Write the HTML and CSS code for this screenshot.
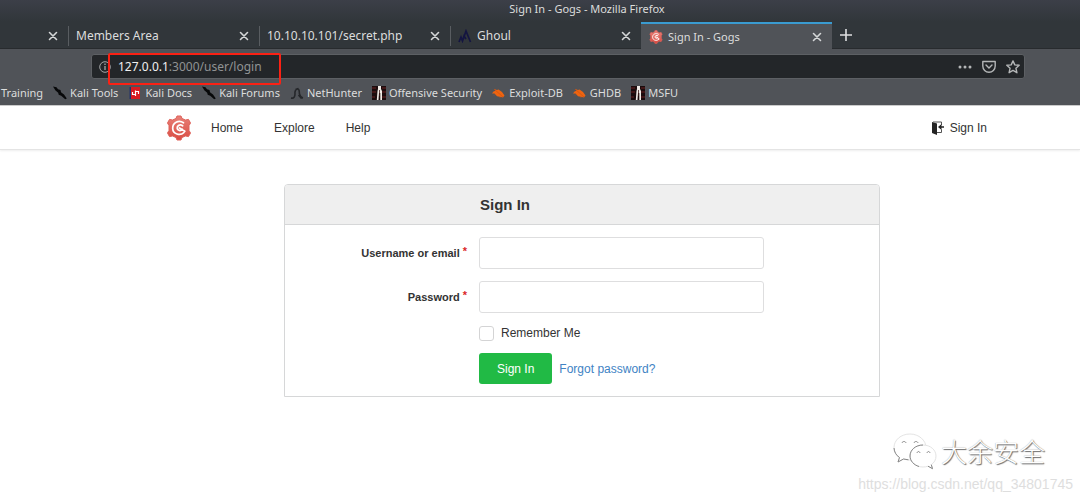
FILE: index.html
```html
<!DOCTYPE html>
<html lang="en">
<head>
<meta charset="utf-8">
<title>Sign In - Gogs</title>
<link rel="stylesheet" href="styles.css">
</head>
<body>
<svg class="defs" width="0" height="0" aria-hidden="true">
  <defs>
    <linearGradient id="red" x1="0" y1="0" x2="0" y2="1"><stop offset="0" stop-color="#e88078"/><stop offset="1" stop-color="#d94c42"/></linearGradient>
    <symbol id="gogs" viewBox="0 0 26 26">
      <path fill="url(#red)" stroke="#df625a" stroke-width="1" stroke-linejoin="round" d="M11 1h4l1 2.500 3.500 1.500 3-.6 2 3.600-1.500 2.600v4.800l1.500 2.600-2 3.600-3-.6-3.500 1.500-1 2.500h-4l-1-2.500L6.500 21l-3 .6-2-3.600L3 15.400v-4.800L1.500 8l2-3.600 3 .6L10 3.500z"/>
      <path fill="none" stroke="#fff" stroke-width="1.700" stroke-linecap="round" d="M17.500 7.800C12.500 4.500 6.500 8 6.700 13.500c.2 5.500 7.300 7.800 11.300 4"/>
      <path fill="none" stroke="#fff" stroke-width="1.800" stroke-linecap="round" d="M16.600 10.700c-2.800-1.700-5.600-.1-5.400 2.400.2 2.700 3.600 3.200 5 1.200M13.500 13l5.300 3.200"/>
    </symbol>
    <symbol id="close" viewBox="0 0 10 10"><path d="M1.500 1.500l7 7m0-7l-7 7" stroke="#d5d7d8" stroke-width="1.600" stroke-linecap="round"/></symbol>
    <symbol id="knife" viewBox="0 0 14 14"><path fill="#070809" d="M0 .5l3.500.8 1.500 2 2.500.6.5 2.400 3 2.200 2.800 4-1.600.8-4-3.600-2.500-1-.5-2L2.500 4.500z"/></symbol>
    <symbol id="hunter" viewBox="0 0 14 14"><path fill="none" stroke="#25272a" stroke-width="1.600" d="M1 12c3 .8 4-1.500 4-4C4.500 5 6 3 7.500 3c2.500 0 1.500 3 2 5 .5 2 1.500 3.500 3.500 4M5.500 3.500l3-1M8.500 9l3 3.500"/></symbol>
    <symbol id="offsec" viewBox="0 0 14 14"><path fill="#1b0c0d" d="M0 0h14v14H0z"/><path stroke="#6b2022" stroke-width="1" d="M0 2h4m-4 4h4m-4 5h3m7-9h4m-4 4h4m-4 5h4"/><path fill="#efeae5" d="M6 0h3v3l1 2v9H8.300V7H7l-.5 7H4.800L5.500 5 6 3z"/><path stroke="#40201d" stroke-width=".8" d="M7.500 4v6"/></symbol>
    <symbol id="spider" viewBox="0 0 14 14"><path fill="#ee6410" d="M1.500 5.500l2-.7L2 3l3 1 1.500-.5L10 6l2.500 3.500L11 11.500 9 11l-4-.8-2.500-2.700L0 7.500z"/><path stroke="#c74d10" stroke-width=".6" d="M2 3l9 8M3 8.500l-1 1M8 11v1"/></symbol>
  </defs>
</svg>

<header class="browser">
  <div class="titlebar">Sign In - Gogs - Mozilla Firefox</div>
  <div class="tabs">
    <div class="tab tab-first"><button class="tab-close" aria-label="Close tab"><svg><use href="#close"/></svg></button></div>
    <div class="tab"><span>Members Area</span><button class="tab-close" aria-label="Close tab"><svg><use href="#close"/></svg></button></div>
    <div class="tab"><span>10.10.10.101/secret.php</span><button class="tab-close" aria-label="Close tab"><svg><use href="#close"/></svg></button></div>
    <div class="tab"><svg class="favicon" viewBox="0 0 14 14"><path fill="none" stroke="#141541" stroke-width="1.700" d="M1 13l2-5 1.500 4L8 2l4.500 11M4.500 12L6 7l2 3"/></svg><span>Ghoul</span><button class="tab-close" aria-label="Close tab"><svg><use href="#close"/></svg></button></div>
    <div class="tab tab-active"><svg class="favicon"><use href="#gogs"/></svg><span>Sign In - Gogs</span><button class="tab-close" aria-label="Close tab"><svg><use href="#close"/></svg></button></div>
    <button class="tab-new" aria-label="New tab"><svg viewBox="0 0 12 12"><path d="M6 0v12M0 6h12" stroke="#dfe0e1" stroke-width="1.600"/></svg></button>
  </div>
  <div class="toolbar">
    <div class="urlbar">
      <svg class="info" viewBox="0 0 12 12"><circle cx="6" cy="6" r="5.300" fill="none" stroke="#a4a6a7"/><path d="M6 5v4M6 2.600v1.300" stroke="#a4a6a7" stroke-width="1.300"/></svg>
      <div class="address"><b>127.0.0.1</b>:3000/user/login<span class="highlight"></span></div>
      <div class="url-actions">
        <button aria-label="Page actions"><svg viewBox="0 0 14 14"><g fill="#b4b6b7"><circle cx="2" cy="7" r="1.500"/><circle cx="7" cy="7" r="1.500"/><circle cx="12" cy="7" r="1.500"/></g></svg></button>
        <button aria-label="Save to Pocket"><svg viewBox="0 0 14 14"><path fill="none" stroke="#b4b6b7" stroke-width="1.400" stroke-linejoin="round" d="M.8 1.500h12.400V6a6.200 6.200 0 0 1-12.400 0z"/><path fill="none" stroke="#b4b6b7" stroke-width="1.400" stroke-linecap="round" d="M4 5l3 3 3-3"/></svg></button>
        <button aria-label="Bookmark"><svg viewBox="0 0 14 14"><path fill="none" stroke="#b4b6b7" stroke-width="1.400" stroke-linejoin="round" d="M7 .9l1.800 4 4.400.4-3.300 2.900 1 4.500L7 10.400l-3.900 2.300 1-4.500L.8 5.300l4.400-.4z"/></svg></button>
      </div>
    </div>
  </div>
  <nav class="bookmarks" aria-label="Bookmarks">
    <a href="#">Training</a>
    <a href="#"><svg><use href="#knife"/></svg>Kali Tools</a>
    <a href="#"><svg viewBox="0 0 14 14"><path fill="#d81b21" d="M3 1h9v12H3z"/><path fill="#24346b" d="M1.500 1H3v12H1.500z"/><path fill="none" stroke="#fff" stroke-width="1.200" d="M4.500 6v2.500h3v-3h3V8M7.500 4.500V10"/></svg>Kali Docs</a>
    <a href="#"><svg><use href="#knife"/></svg>Kali Forums</a>
    <a href="#"><svg><use href="#hunter"/></svg>NetHunter</a>
    <a href="#"><svg><use href="#offsec"/></svg>Offensive Security</a>
    <a href="#"><svg><use href="#spider"/></svg>Exploit-DB</a>
    <a href="#"><svg><use href="#spider"/></svg>GHDB</a>
    <a href="#"><svg><use href="#offsec"/></svg>MSFU</a>
  </nav>
</header>

<nav class="site-nav">
  <div class="site-nav-inner">
    <a class="brand" href="#" aria-label="Gogs"><svg><use href="#gogs"/></svg></a>
    <a href="#">Home</a>
    <a href="#">Explore</a>
    <a href="#">Help</a>
    <a class="nav-sign" href="#"><svg viewBox="0 0 12 14"><path fill="#242424" d="M0 1l5 1.500V14L0 12z"/><path fill="none" stroke="#555" d="M1 1h8.500v3M5 11.500h4.500V8.500"/><path fill="#242424" d="M12 5.300v1.400H9.500V9L6 6l3.500-3v2.300z"/></svg>Sign In</a>
  </div>
</nav>

<main>
  <form class="card">
    <h1>Sign In</h1>
    <div class="fields">
      <label for="user">Username or email<i>*</i></label>
      <input id="user" class="text" type="text">
      <label for="pass">Password<i>*</i></label>
      <input id="pass" class="text" type="password">
      <div class="remember"><input id="remember" type="checkbox"><label for="remember">Remember Me</label></div>
      <div class="actions"><button type="button">Sign In</button><a href="#">Forgot password?</a></div>
    </div>
  </form>
</main>

<div class="watermark">
  <div class="account">
    <svg viewBox="0 0 44 38"><g fill="#fff" stroke="#dcdcdc" stroke-width=".8"><path d="M17 2C8 2 1 8 1 15.500c0 4 2 7.500 5.500 10L5 30l5.500-3c2 .7 4 1 6.500 1 9 0 16-5.500 16-12.500S26 2 17 2z"/><path d="M30 13c-7.500 0-13 5-13 11s5.500 11 13 11c2 0 3.500-.3 5-.8l4.500 2.500-1.200-4C41.300 30.700 43 27.500 43 24c0-6-5.500-11-13-11z"/></g><g fill="none" stroke="#888"><path d="M1 16c.3 4 2 7.300 5.500 9.500L5 30l5.500-3 5 .8M30 13c-7.500 0-13 5-13 11 0 5 4 9 9 10.500M35 34.200l4.500 2.500-1.200-4"/><path d="M9 11c.5-2 3.500-2 4 0m8 0c.5-2 3.500-2 4 0M24 21c.5-2 2.500-2 3 0m7 0c.5-2 2.500-2 3 0"/></g></svg>
    <span lang="zh">大余安全</span>
  </div>
  <div class="source">https://blog.csdn.net/qq_34801745</div>
</div>
</body>
</html>
```
FILE: styles.css
```css
* { box-sizing: border-box; }

body {
  margin: 0;
  min-height: 100vh;
  background: #fff;
  color: #333;
  font: 12px/16px "Liberation Sans", Arial, sans-serif;
  position: relative;
}

a { color: inherit; text-decoration: none; }
button { border: 0; padding: 0; background: none; font: inherit; color: inherit; }
svg { display: block; flex: none; }
.defs { position: absolute; }

/* Browser window */
.browser {
  background: #505358;
  color: #dcdddd;
  font: 11px/16px "Noto Sans", sans-serif;
  border-bottom: 1px solid #c9c9c9;
}

.titlebar {
  height: 22px;
  padding: 1px 0 0 94px;
  background: linear-gradient(#3c3f48, #31363a);
  text-align: center;
}

.tabs {
  display: flex;
  height: 27px;
  background: #31363a;
  border-bottom: 1px solid #282b2e;
}

.tab {
  display: flex;
  align-items: center;
  width: 191px;
  padding: 1px 10px 0 8px;
  font-size: 12px;
}

.tab-first { width: 68px; }
.tab-active {
  height: 27px;
  padding-top: 0;
  background: #505358;
  border-top: 2px solid #3a9bd0;
  font-size: 11px;
}
.tab + .tab:not(.tab-active)::before {
  content: "";
  width: 1px;
  height: 20px;
  margin-left: -8px;
  margin-right: 7px;
  background: #595d61;
}
.favicon { width: 14px; height: 14px; margin-right: 5px; }
.tab-close { margin-left: auto; }
.tab-close svg { width: 10px; height: 10px; }
.tab-new { padding: 0 8px; }
.tab-new svg { width: 12px; height: 12px; }

.toolbar { padding: 5px 55px 0 91px; }
.urlbar {
  display: flex;
  align-items: center;
  height: 25px;
  padding: 0 4px 0 7px;
  background: #232629;
  border: 1px solid #5d6064;
  border-radius: 3px;
  font-size: 12px;
}
.info { width: 12px; height: 12px; }
.address { position: relative; margin-left: 7px; padding-top: 1px; color: #919394; }
.address b { font-weight: 400; color: #f0f0f0; }
.highlight {
  position: absolute;
  inset: -5px -19px -10px -10px;
  border: 2px solid #fb2114;
  border-radius: 2px;
}
.url-actions { display: flex; gap: 10px; margin-left: auto; }
.url-actions svg { width: 14px; height: 14px; }

.bookmarks { display: flex; gap: 10px; height: 26px; padding: 2px 0 0 1px; align-items: center; white-space: nowrap; }
.bookmarks a { display: flex; align-items: center; gap: 3px; }
.bookmarks svg { width: 14px; height: 14px; }

/* Site navigation */
.site-nav {
  border-bottom: 1px solid #e4e4e4;
  box-shadow: 0 1px 2px #eee;
}
.site-nav-inner {
  display: flex;
  align-items: center;
  gap: 31px;
  height: 43px;
  padding: 0 93px 0 166px;
}
.brand { margin-right: -12px; }
.brand svg { width: 26px; height: 26px; }
.nav-sign { display: flex; align-items: center; gap: 6px; margin-left: auto; }
.nav-sign svg { width: 12px; height: 14px; }

/* Sign-in form */
main { padding: 34px 0 0 84px; }
.card {
  width: 60%;
  max-width: 596px;
  margin: 0 auto;
  border: 1px solid #d6d7d8;
  border-radius: 4px 4px 0 0;
}
.card h1 {
  margin: 0;
  padding: 10px 0 9px 195px;
  background: #efefef;
  border-bottom: 1px solid #d6d7d8;
  border-radius: 3px 3px 0 0;
  font-size: 15px;
  line-height: 20px;
}
.fields {
  display: grid;
  grid-template-columns: 182px minmax(0, 285px);
  gap: 12px;
  align-items: center;
  padding: 12px 0;
}
.fields > label { text-align: right; font-size: 11px; font-weight: 700; }
.fields i { margin-left: 3px; color: #db2828; font-style: normal; vertical-align: 2px; line-height: 1; }
.text {
  width: 100%;
  height: 32px;
  padding: 0 10px;
  border: 1px solid #dededf;
  border-radius: 3px;
  background: #fff;
  font: inherit;
}
.remember, .actions { grid-column: 2; display: flex; align-items: center; gap: 7px; }
.remember input {
  appearance: none;
  width: 15px;
  height: 15px;
  margin: 0;
  border: 1px solid #d4d4d5;
  border-radius: 3px;
}
.actions button {
  height: 31px;
  padding: 0 18px;
  border-radius: 3px;
  background: #21ba45;
  color: #fff;
}
.actions a { color: #4183c4; }

/* Overlaid watermark */
.watermark { position: absolute; right: 7px; bottom: 6px; text-align: right; }
.account {
  display: flex;
  justify-content: flex-end;
  align-items: center;
  gap: 4px;
  padding: 0 28px 4px 0;
}
.account svg { width: 44px; height: 38px; }
.account span {
  color: #fff;
  font: 300 26px/38px "Noto Sans CJK SC", sans-serif;
  text-shadow: 1px 1px 1px #666, 0 0 1px #999;
}
.source { font-size: 14px; line-height: 20px; color: #dedede; }
```
